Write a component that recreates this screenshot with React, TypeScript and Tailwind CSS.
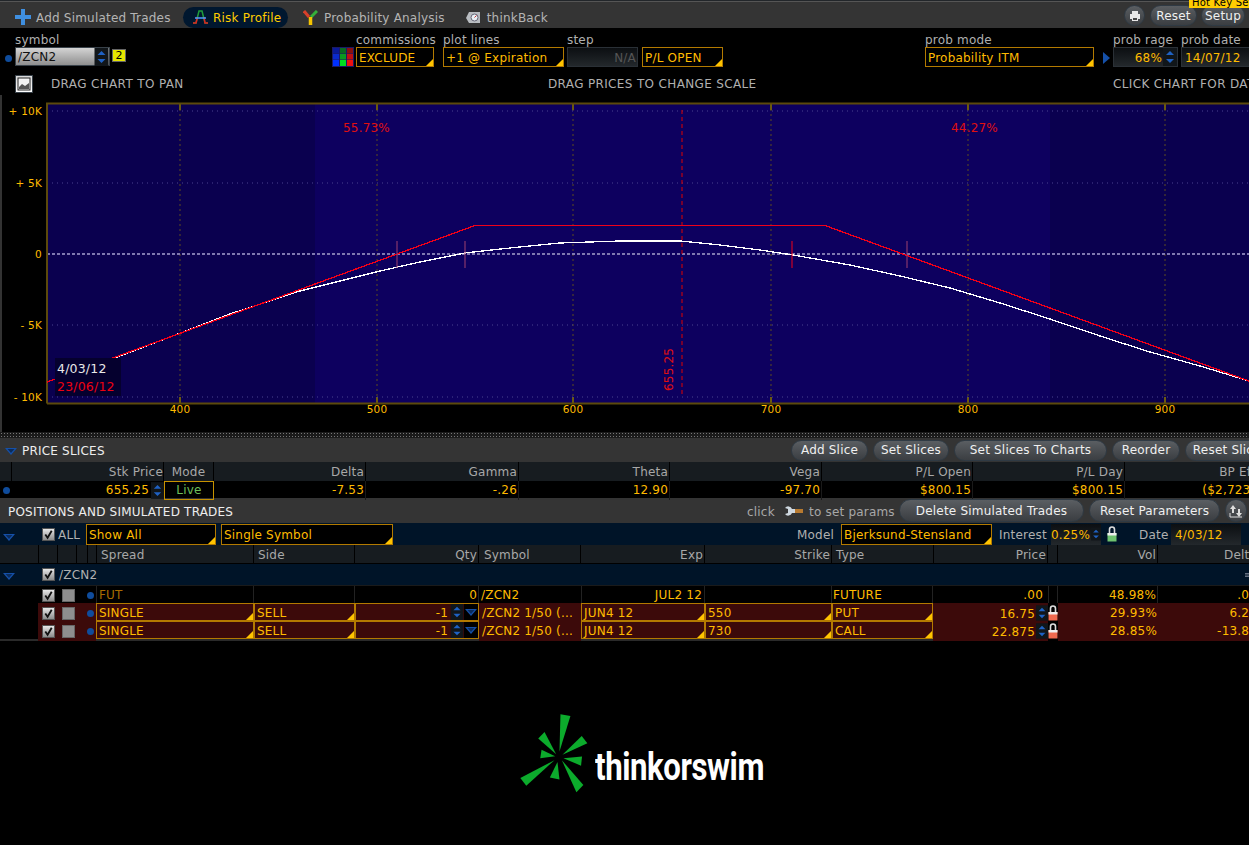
import React from "react";

const GOLD = "text-[#ffbb00]";

function Corner() {
  return <span className="absolute right-0 bottom-0 w-0 h-0 border-l-[7px] border-l-transparent border-b-[7px] border-b-[#ffc400]" />;
}

function Sel({ children, className = "" }: { children: React.ReactNode; className?: string }) {
  return (
    <div className={`relative flex items-center border border-[#b37a00] pl-[2px] pt-[2px] ${GOLD} whitespace-nowrap overflow-hidden ${className}`}>
      {children}
      <Corner />
    </div>
  );
}

function Spinner({ className = "" }: { className?: string }) {
  return (
    <svg viewBox="0 0 14 18" className={`shrink-0 ${className}`}>
      <rect width="14" height="18" fill="#11161a" />
      <path d="M7 3l4 4H3z" fill="#1f62c4" />
      <path d="M7 15l-4-4h8z" fill="#1f62c4" />
    </svg>
  );
}

function Dot({ className = "" }: { className?: string }) {
  return <span className={`block shrink-0 w-[7px] h-[7px] rounded-full bg-[#0f4c9c] ${className}`} />;
}

function Tri({ className = "" }: { className?: string }) {
  return (
    <svg viewBox="0 0 12 7" className={`w-[12px] h-[7px] ${className}`}>
      <path d="M0 0h12L6 7z" fill="#1550a8" />
      <path d="M2.500 1h7L6 5z" fill="#000" opacity=".45" />
    </svg>
  );
}

function Check() {
  return (
    <span className="flex items-center justify-center w-[13px] h-[13px] bg-gradient-to-b from-[#e8e8e8] to-[#8d8d8d] border border-[#555]">
      <svg viewBox="0 0 12 12" className="w-[11px] h-[11px]">
        <path d="M2.500 6l2.500 3.500L9.500 2" stroke="#111" strokeWidth="2" fill="none" />
      </svg>
    </span>
  );
}

function Lock() {
  return <span className="block w-[13px] h-[13px] bg-[#8e8e8e] border border-[#666]" />;
}

function Padlock({ open = false }: { open?: boolean }) {
  return (
    <svg viewBox="0 0 10 16" className="w-[10px] h-[16px] shrink-0">
      <path d="M2.500 7V3.500a2.500 2.500 0 0 1 5 0V7" stroke="#ddd" strokeWidth="1.600" fill="none" />
      <rect x="0.500" y="7" width="9" height="8.500" fill={open ? "#6fc36f" : "#ef6a50"} />
      <rect x="0.500" y="7" width="9" height="2.500" fill="#eee" />
    </svg>
  );
}

function Pill({ children, className = "" }: { children: React.ReactNode; className?: string }) {
  return (
    <div className={`flex items-center justify-center shrink-0 rounded-full border border-[#2f3a44] bg-gradient-to-b from-[#5a5e62] to-[#3b3e42] text-[#f0f0f0] whitespace-nowrap ${className}`}>
      {children}
    </div>
  );
}

function Field({ label, className = "", children }: { label: string; className?: string; children: React.ReactNode }) {
  return (
    <div className={`flex flex-col shrink-0 ${className}`}>
      <div className="h-[19px] leading-[24px] text-[#b0b0b0] whitespace-nowrap">{label}</div>
      {children}
    </div>
  );
}

function Toolbar() {
  return (
    <div className="h-[26px] pt-[6px] flex items-center bg-[#343434] text-[#b4b4b4] relative [&>*]:shrink-0">
      <svg viewBox="0 0 16 16" className="w-[16px] h-[16px] ml-[15px] -mt-[2px]">
        <path d="M6 0h4v6h6v4h-6v6H6v-6H0V6h6z" fill="#3f8fe0" />
      </svg>
      <span className="ml-[5px] w-[136px] whitespace-nowrap">Add Simulated Trades</span>
      <div className="ml-[11px] w-[105px] h-[21px] -mt-[2px] rounded-full bg-[#00172f] flex items-center pl-[10px]">
        <svg viewBox="0 0 15 14" className="w-[15px] h-[14px]">
          <path d="M0 13h3L6 1h3l3 12h3" stroke="#1f9d3a" strokeWidth="1.500" fill="none" />
          <path d="M0 13h3l1.500-6" stroke="#e02020" strokeWidth="1.500" fill="none" />
          <path d="M11 7l1 6h3" stroke="#e02020" strokeWidth="1.500" fill="none" />
          <path d="M2 8h11" stroke="#4aa0ff" strokeWidth="1.500" />
        </svg>
        <span className="ml-[5px] mt-[2px] text-[#ffcc00] whitespace-nowrap">Risk Profile</span>
      </div>
      <svg viewBox="0 0 15 15" className="w-[15px] h-[15px] ml-[15px] -mt-[2px]">
        <path d="M1 1l5 6" stroke="#d8402a" strokeWidth="3" />
        <path d="M14 1L8 7" stroke="#35b03a" strokeWidth="3" />
        <path d="M7.500 7v8" stroke="#f5c400" strokeWidth="3.500" />
      </svg>
      <span className="ml-[6px] whitespace-nowrap">Probability Analysis</span>
      <svg viewBox="0 0 15 15" className="w-[15px] h-[15px] ml-[21px] -mt-[2px]">
        <path d="M3 2h11v11H3L0 8z" fill="#b9bdc2" />
        <circle cx="8.500" cy="7.500" r="3.500" fill="#e8f0f5" stroke="#667" />
        <path d="M8.500 7.500l2-2" stroke="#c33" />
      </svg>
      <span className="ml-[6px] whitespace-nowrap">thinkBack</span>
      <div className="ml-auto flex items-center gap-[4px] mr-[4px] -mt-[5px]">
        <Pill className="w-[21px] h-[21px] mr-[1px]">
          <svg viewBox="0 0 12 12" className="w-[12px] h-[12px]">
            <path d="M3 1h6v3H3zM1 4h10v5H9v2H3V9H1z" fill="#e8e8e8" />
            <path d="M4 8h4v2H4z" fill="#444" />
          </svg>
        </Pill>
        <Pill className="w-[47px] h-[21px]">Reset</Pill>
        <Pill className="w-[44px] h-[21px]">Setup</Pill>
      </div>
      <div className="absolute right-0 -top-[2px] w-[60px] h-[8px] bg-[#ffcc00] text-black text-[10px] leading-[6px] pl-[3px] overflow-hidden whitespace-nowrap">Hot Key Setup</div>
    </div>
  );
}

function Controls() {
  return (
    <div className="h-[44px] flex bg-black">
      <Dot className="mt-[27px] ml-[5px]" />
      <Field label="symbol" className="ml-[3px] w-[95px]">
        <div className="h-[19px] flex items-center border border-[#39424a] bg-gradient-to-b from-[#d4d4d4] to-[#8f8f8f] text-[#111] pl-[2px]">
          /ZCN2
          <Spinner className="ml-auto w-[15px] h-[18px]" />
        </div>
      </Field>
      <div className="shrink-0 ml-[2px] mt-[21px] w-[14px] h-[13px] bg-[#e6e600] border border-[#666] text-black text-[11px] leading-[12px] text-center">2</div>
      <svg viewBox="0 0 22 20" className="ml-[206px] mt-[19px] w-[22px] h-[20px] shrink-0">
        <rect width="22" height="20" fill="#1a1a66" />
        <rect x="1" y="1" width="6" height="5.500" fill="#0a1a99" />
        <rect x="8" y="1" width="6" height="5.500" fill="#0a6a20" />
        <rect x="15" y="1" width="6" height="5.500" fill="#8a1010" />
        <rect x="1" y="7" width="6" height="5.500" fill="#0a2acc" />
        <rect x="8" y="7" width="6" height="5.500" fill="#0a9a20" />
        <rect x="15" y="7" width="6" height="5.500" fill="#c01010" />
        <rect x="1" y="13" width="6" height="6" fill="#0030ff" />
        <rect x="8" y="13" width="6" height="6" fill="#00dd20" />
        <rect x="15" y="13" width="6" height="6" fill="#ee1010" />
      </svg>
      <Field label="commissions" className="ml-[2px] w-[78px]">
        <Sel className="h-[20px]">EXCLUDE</Sel>
      </Field>
      <Field label="plot lines" className="ml-[9px] w-[121px]">
        <Sel className="h-[20px]">+1 @ Expiration</Sel>
      </Field>
      <Field label="step" className="ml-[3px] w-[71px]">
        <div className="h-[20px] border border-[#2a3036] bg-gradient-to-b from-[#0c0f12] to-[#23282c] text-[#555] text-right pr-[1px] leading-[20px]">N/A</div>
      </Field>
      <Field label="" className="ml-[4px] w-[81px]">
        <Sel className="h-[20px]">P/L OPEN</Sel>
      </Field>
      <Field label="prob mode" className="ml-[202px] w-[169px]">
        <Sel className="h-[20px]">Probability ITM</Sel>
      </Field>
      <svg viewBox="0 0 7 12" className="ml-[9px] mt-[24px] w-[7px] h-[12px] shrink-0">
        <path d="M0 0l7 6-7 6z" fill="#1550a8" />
      </svg>
      <Field label="prob rage" className="ml-[3px] w-[65px]">
        <div className={`h-[20px] flex items-center justify-end border border-[#2a3036] bg-gradient-to-b from-[#0c0f12] to-[#23282c] ${GOLD}`}>
          <span className="mt-[2px]">68%</span>
          <Spinner className="ml-[1px] w-[14px] h-[18px]" />
        </div>
      </Field>
      <Field label="prob date" className="ml-[3px] w-[80px]">
        <div className={`h-[20px] flex items-center border border-[#2a3036] bg-gradient-to-b from-[#0c0f12] to-[#23282c] pl-[3px] pt-[2px] ${GOLD}`}>14/07/12</div>
      </Field>
    </div>
  );
}

function DragRow() {
  return (
    <div className="h-[23px] flex items-center bg-black text-[#b0b0b0] whitespace-nowrap tracking-[0.35px] [&>*]:shrink-0">
      <div className="ml-[15px] w-[18px] h-[18px] border border-[#39424a] bg-gradient-to-b from-[#d8d8d8] to-[#fff] flex items-center justify-center">
        <svg viewBox="0 0 14 14" className="w-[14px] h-[14px]">
          <rect x="1" y="1" width="12" height="12" fill="#f4f4f4" stroke="#222" />
          <path d="M2 10l3-3 3 2 4-3v6H2z" fill="#555" />
        </svg>
      </div>
      <span className="ml-[18px] w-[497px]">DRAG CHART TO PAN</span>
      <span className="w-[565px]">DRAG PRICES TO CHANGE SCALE</span>
      <span>CLICK CHART FOR DATES</span>
    </div>
  );
}

const RED_LINE = "47,382 475,225.500 825,225.500 1249,381";
const WHITE_LINE =
  "47,382 120,356 170,337 230,314 300,291 340,281 380,271 420,262 465,253 510,248 560,243 620,241 680,241 720,245 760,250 793,255 850,265 900,276 950,288 1000,303 1050,319 1100,336 1150,352 1200,366 1249,381";

function Chart() {
  const xs: [number, string][] = [[180, "400"], [377, "500"], [573, "600"], [771, "700"], [968, "800"], [1165, "900"]];
  const ys: [number, string][] = [[111, "+ 10K"], [183, "+ 5K"], [254, "0"], [325, "- 5K"], [397, "- 10K"]];
  return (
    <svg viewBox="0 95 1249 337" className="block w-[1249px] h-[337px] bg-black font-['DejaVu_Sans',sans-serif] text-[10.5px]">
      <rect x="0" y="95" width="2" height="337" fill="#333" />
      <rect x="47" y="104" width="1202" height="299" fill="#0a004f" />
      <rect x="315" y="104" width="735" height="299" fill="#0d005f" />
      {xs.map(([x, t]) => (
        <g key={t}>
          <line x1={x} x2={x} y1="104" y2="403" stroke="#5c4a20" strokeWidth="1" strokeDasharray="2 3" />
          <line x1={x} x2={x} y1="103" y2="110" stroke="#6b5a10" strokeWidth="2" />
          <line x1={x} x2={x} y1="397" y2="404" stroke="#6b5a10" strokeWidth="2" />
          <text x={x} y="413" fill="#ffbb00" textAnchor="middle">{t}</text>
        </g>
      ))}
      {ys.map(([y, t]) => (
        <g key={t}>
          <line x1="47" x2="1249" y1={y} y2={y} stroke={t === "0" ? "#7f78b0" : "#4a4390"} strokeWidth={t === "0" ? 2 : 1} strokeDasharray={t === "0" ? "3 2" : "1 4"} />
          <text x="42" y={y + 4} fill="#ffbb00" textAnchor="end">{t}</text>
        </g>
      ))}
      <path d="M47 403.500V103.500H1249M47 403.500H1249" fill="none" stroke="#5c4a0c" strokeWidth="2" />
      <line x1="682" x2="682" y1="110" y2="397" stroke="#e00000" strokeWidth="1" strokeDasharray="4 3" />
      <polyline points={WHITE_LINE} fill="none" stroke="#ffffff" strokeWidth="1.300" shapeRendering="crispEdges" />
      <polyline points={RED_LINE} fill="none" stroke="#f00018" strokeWidth="1.300" shapeRendering="crispEdges" />
      <line x1="397" x2="397" y1="241" y2="268" stroke="#a04070" />
      <line x1="465" x2="465" y1="241" y2="268" stroke="#a04070" />
      <line x1="792" x2="792" y1="241" y2="268" stroke="#f00018" />
      <line x1="907" x2="907" y1="241" y2="268" stroke="#a04070" />
      <text x="343" y="132" fill="#e01010" fontSize="12">55.73%</text>
      <text x="951" y="132" fill="#e01010" fontSize="12">44.27%</text>
      <text transform="translate(673 391) rotate(-90)" fill="#e01010" fontSize="12">655.25</text>
      <rect x="55" y="358" width="66" height="38" fill="#05002e" />
      <text x="57" y="373" fill="#e8e8e8" fontSize="12.500">4/03/12</text>
      <text x="57" y="391" fill="#ee0010" fontSize="12.500">23/06/12</text>
    </svg>
  );
}

function Splitter() {
  return <div className="h-[6px] bg-[#1a1a1a] bg-[radial-gradient(#777_0.7px,transparent_0.8px)] bg-[length:3px_3px]" />;
}

function PriceSlices() {
  const cols = "grid grid-cols-[12px_152px_50px_152px_153px_151px_152px_151px_152px_152px]";
  const heads = ["Delta", "Gamma", "Theta", "Vega", "P/L Open", "P/L Day", "BP Effect"];
  const vals = ["-7.53", "-.26", "12.90", "-97.70", "$800.15", "$800.15", "($2,723.85)"];
  return (
    <>
      <div className="h-[24px] flex items-center bg-[#343434] text-[#eee] whitespace-nowrap [&>*]:shrink-0">
        <Tri className="ml-[5px] mt-[3px]" />
        <span className="ml-[5px] w-[769px] mt-[2px]">PRICE SLICES</span>
        <div className="flex gap-[5px]">
          <Pill className="w-[77px] h-[21px]">Add Slice</Pill>
          <Pill className="w-[76px] h-[21px]">Set Slices</Pill>
          <Pill className="w-[153px] h-[21px]">Set Slices To Charts</Pill>
          <Pill className="w-[68px] h-[21px]">Reorder</Pill>
          <Pill className="w-[90px] h-[21px]">Reset Slices</Pill>
        </div>
      </div>
      <div className={`${cols} h-[19px] bg-[#171c20] text-[#a8a8a8] leading-[21px] whitespace-nowrap`}>
        <div className="border-r border-black" />
        <div className="border-r border-black text-right">Stk Price</div>
        <div className="border-r border-black text-center">Mode</div>
        {heads.map((h) => (
          <div key={h} className="border-r border-black text-right pr-[1px]">{h}</div>
        ))}
      </div>
      <div className={`${cols} h-[17px] bg-black ${GOLD} leading-[19px] whitespace-nowrap`}>
        <div className="flex items-center pl-[3px]"><Dot /></div>
        <div className="flex items-center justify-end">
          655.25
          <Spinner className="ml-[2px] w-[13px] h-[17px]" />
        </div>
        <div className="border border-[#c79200] text-center text-[#6fbf5a] leading-[16px]">Live</div>
        {vals.map((v, i) => (
          <div key={i} className="border-r border-[#1a1a1a] text-right pr-[1px]">{v}</div>
        ))}
      </div>
    </>
  );
}

function PositionsHeader() {
  return (
    <div className="h-[25px] flex items-center bg-[#343434] text-[#eee] whitespace-nowrap [&>*]:shrink-0">
      <span className="ml-[8px] w-[739px] mt-[2px]">POSITIONS AND SIMULATED TRADES</span>
      <span className="w-[32px] mt-[2px] text-[#a8a8a8]">click</span>
      <svg viewBox="0 0 18 10" className="ml-[6px] w-[18px] h-[10px]">
        <path d="M0 2a4 4 0 0 1 7 1h4v4H7a4 4 0 0 1-7 1l3-1V3z" fill="#cfd8e0" />
        <rect x="10" y="3" width="8" height="4" fill="#b87a30" />
      </svg>
      <span className="ml-[6px] w-[90px] mt-[2px] text-[#a8a8a8]">to set params</span>
      <div className="flex gap-[5px]">
        <Pill className="w-[185px] h-[23px]">Delete Simulated Trades</Pill>
        <Pill className="w-[131px] h-[23px]">Reset Parameters</Pill>
        <Pill className="w-[22px] h-[23px]">
          <svg viewBox="0 0 14 14" className="w-[14px] h-[14px]">
            <path d="M4 1l3 4H5v4H3V5H1zM10 13l-3-4h2V5h2v4h2z" fill="#ddd" />
            <path d="M1 9v4h12" stroke="#ddd" fill="none" />
          </svg>
        </Pill>
      </div>
    </div>
  );
}

function FilterRow() {
  return (
    <div className="h-[22px] flex items-center bg-[#001428] text-[#b0b0b0] whitespace-nowrap [&>*]:shrink-0">
      <Tri className="ml-[3px] mt-[6px]" />
      <div className="ml-[27px]"><Check /></div>
      <span className="ml-[3px] w-[28px] mt-[2px]">ALL</span>
      <Sel className="w-[130px] h-[21px] bg-black">Show All</Sel>
      <Sel className="ml-[5px] w-[172px] h-[21px] bg-black">Single Symbol</Sel>
      <span className="ml-[404px] w-[44px] mt-[2px]">Model</span>
      <Sel className="w-[151px] h-[21px] bg-black">Bjerksund-Stensland</Sel>
      <span className="ml-[7px] w-[52px] mt-[2px]">Interest</span>
      <div className={`w-[50px] h-[21px] flex items-center justify-end bg-gradient-to-b from-[#0c0f12] to-[#23282c] ${GOLD}`}>
        <span className="mt-[2px]">0.25%</span>
        <Spinner className="ml-[1px] w-[10px] h-[20px]" />
      </div>
      <span className="ml-[6px]"><Padlock open /></span>
      <span className="ml-[22px] w-[32px] mt-[2px]">Date</span>
      <div className={`w-[70px] h-[21px] flex items-center bg-gradient-to-b from-[#0c0f12] to-[#23282c] pl-[4px] pt-[2px] ${GOLD}`}>4/03/12</div>
    </div>
  );
}

const POS_COLS = "grid grid-cols-[38px_19px_19px_11px_9px_158px_101px_124px_102px_124px_127px_101px_115px_10px_100px_100px]";

function TradeRow({ strike, type, price, vol, delta }: { strike: string; type: string; price: string; vol: string; delta: string }) {
  return (
    <div className={`${POS_COLS} h-[18px] leading-[16px] ${GOLD} whitespace-nowrap bg-black`}>
      <div />
      <div className="bg-[#3c0a0a] flex items-center pl-[4px]"><Check /></div>
      <div className="bg-[#3c0a0a] flex items-center pl-[5px]"><Lock /></div>
      <div className="bg-[#3c0a0a]" />
      <div className="bg-[#3c0a0a] flex items-center"><Dot /></div>
      <Sel className="bg-[#3c0a0a] h-[18px]">SINGLE</Sel>
      <Sel className="bg-[#3c0a0a] h-[18px]">SELL</Sel>
      <div className="bg-[#3c0a0a] border border-[#b37a00] h-[18px] flex items-center justify-end">
        <span className="mt-[2px]">-1</span>
        <Spinner className="ml-[2px] w-[14px] h-[16px]" />
        <span className="w-[14px] h-[16px] bg-black flex items-center justify-center"><Tri className="w-[10px]" /></span>
      </div>
      <div className="bg-[#3c0a0a] pl-[3px] overflow-hidden leading-[20px]">/ZCN2 1/50 (...</div>
      <Sel className="bg-[#3c0a0a] h-[18px]">JUN4 12</Sel>
      <Sel className="bg-[#3c0a0a] h-[18px]">{strike}</Sel>
      <Sel className="bg-[#3c0a0a] h-[18px]">{type}</Sel>
      <div className="bg-[#3c0a0a] flex items-center justify-end">
        <span className="mt-[2px]">{price}</span>
        <Spinner className="ml-[1px] w-[12px] h-[18px]" />
      </div>
      <div className="bg-black flex items-center"><Padlock /></div>
      <div className="bg-[#3c0a0a] text-right leading-[20px] pr-[1px]">{vol}</div>
      <div className="bg-[#3c0a0a] text-right leading-[20px] pr-[1px]">{delta}</div>
    </div>
  );
}

function Positions() {
  return (
    <>
      <div className={`${POS_COLS} h-[18px] bg-[#171c20] text-[#a8a8a8] leading-[20px] whitespace-nowrap`}>
        <div />
        <div className="border-l border-black" />
        <div className="border-l border-black" />
        <div className="border-l border-black" />
        <div className="border-l border-black" />
        <div className="border-l border-r border-black pl-[4px]">Spread</div>
        <div className="border-r border-black pl-[4px]">Side</div>
        <div className="border-r border-black text-right pr-[1px]">Qty</div>
        <div className="border-r border-black pl-[5px]">Symbol</div>
        <div className="border-r border-black text-right pr-[1px]">Exp</div>
        <div className="border-r border-black text-right pr-[1px]">Strike</div>
        <div className="pl-[4px]">Type</div>
        <div className="border-l border-r border-black text-right pr-[1px]">Price</div>
        <div className="border-r border-black" />
        <div className="border-r border-black text-right pr-[1px]">Vol</div>
        <div className="text-right pr-[1px]">Delta</div>
      </div>
      <div className="h-[22px] flex items-center bg-[#001428] text-[#b0b0b0] border-t border-black relative">
        <Tri className="ml-[3px] mt-[4px]" />
        <div className="ml-[27px]"><Check /></div>
        <span className="ml-[4px]">/ZCN2</span>
        <svg viewBox="0 0 8 8" className="absolute right-0 top-[7px] w-[4px] h-[8px]">
          <path d="M0 1h8M0 4h8M0 7h8" stroke="#ccd" />
        </svg>
      </div>
      <div className={`${POS_COLS} h-[18px] leading-[18px] ${GOLD} bg-black whitespace-nowrap border-t border-[#1a1a1a]`}>
        <div />
        <div className="flex items-center pl-[4px]"><Check /></div>
        <div className="flex items-center pl-[5px]"><Lock /></div>
        <div />
        <div className="flex items-center"><Dot /></div>
        <div className="pl-[2px] text-[#a86c00] border-l border-r border-[#222]">FUT</div>
        <div className="border-r border-[#222]" />
        <div className="text-right border-r border-[#222] pr-[1px]">0</div>
        <div className="pl-[2px]">/ZCN2</div>
        <div className="text-right pr-[2px] border-l border-r border-[#222]">JUL2 12</div>
        <div className="border-r border-[#222]" />
        <div className="pl-[1px] border-r border-[#222]">FUTURE</div>
        <div className="text-right pr-[5px]">.00</div>
        <div className="border-l border-r border-[#222]" />
        <div className="text-right pr-[1px] border-r border-[#222]">48.98%</div>
        <div className="text-right pr-[1px]">.00</div>
      </div>
      <TradeRow strike="550" type="PUT" price="16.75" vol="29.93%" delta="6.27" />
      <TradeRow strike="730" type="CALL" price="22.875" vol="28.85%" delta="-13.83" />
      <div className="h-[2px] bg-[#2a2a2a]" />
    </>
  );
}

function Logo() {
  const rays = [
    "181,40 211,45 178,152",
    "245,105 262,127 187,162",
    "133,93 114,113 168,160",
    "124,147 120,172 165,166",
    "190,172 246,167 243,195",
    "60,232 78,255 163,178",
    "149,230 178,236 172,184",
    "250,253 229,275 185,178",
  ];
  return (
    <div className="flex items-start pt-[70px] pl-[517px]">
      <svg viewBox="50 30 220 250" className="w-[73px] h-[83px] shrink-0">
        {rays.map((p) => (
          <polygon key={p} points={p} fill="#0cab2c" />
        ))}
      </svg>
      <span className="ml-[5px] mt-[34px] text-white text-[38px] leading-[44px] font-bold tracking-[-0.5px] font-['Roboto',sans-serif] origin-left scale-x-[0.82] whitespace-nowrap">thinkorswim</span>
    </div>
  );
}

export default function App() {
  return (
    <div className="w-[1249px] h-[845px] overflow-hidden bg-black text-[12px] font-['DejaVu_Sans',sans-serif] tracking-[0.2px]">
      <div className="h-[2px] bg-[#22262a] border-b border-[#555]" />
      <Toolbar />
      <Controls />
      <DragRow />
      <Chart />
      <Splitter />
      <PriceSlices />
      <PositionsHeader />
      <FilterRow />
      <Positions />
      <Logo />
    </div>
  );
}
